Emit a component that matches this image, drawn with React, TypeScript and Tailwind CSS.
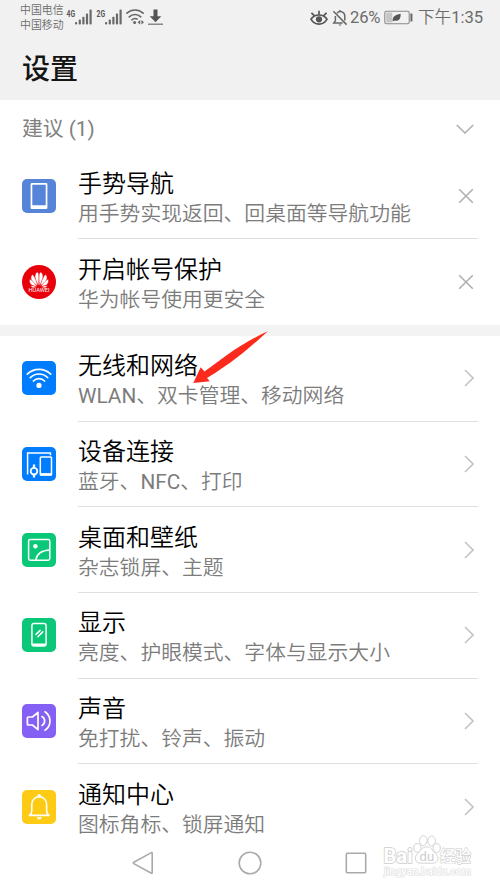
import type { ReactNode } from "react";

type Suggestion = {
    title: string;
    summary: string;
    icon: ReactNode;
};

type RowProps = Suggestion & {
    action: ReactNode;
    last?: boolean;
};

const PhoneIcon = () => (
    <svg viewBox="0 0 34 34" className="size-[34px]">
        <rect width="34" height="34" rx="5" fill="#5584d8" />
        <path
            fillRule="evenodd"
            fill="#fff"
            d="M9.8 4h14.4a1.2 1.2 0 0 1 1.2 1.2v23.6a1.2 1.2 0 0 1-1.2 1.2H9.8a1.2 1.2 0 0 1-1.2-1.2V5.2A1.2 1.2 0 0 1 9.8 4Zm.5 1.7v20.6h13.4V5.7Z"
        />
    </svg>
);

const HuaweiIcon = () => (
    <svg viewBox="0 0 34 34" className="size-[34px]">
        <circle cx="17" cy="17" r="17" fill="#e8000b" />
        <g fill="#fff" stroke="#e8000b" strokeWidth="0.4">
            <path d="M16.5 20.6C13.3 15.8 11.6 10.4 14.6 7.4c1.5-.5 2.2 1 2.3 3.6.1 3.6 0 7-.4 9.6Z" />
            <path d="M17.5 20.6c3.2-4.8 4.9-10.2 1.9-13.2-1.5-.5-2.2 1-2.3 3.6-.1 3.600 0 7 .4 9.600Z" />
            <path d="M15.500 20.700c-.8-4.200-2.300-8-4.700-11.300-3.600 2.400-2 7.400 4.700 11.300Z" />
            <path d="M18.500 20.700c.8-4.200 2.300-8 4.700-11.300 3.600 2.400 2 7.400-4.700 11.300Z" />
            <path d="M14.800 21.300c-1.700-2.900-4-5.300-6.900-7.300-1.400 4.200 1.500 7.300 6.900 7.300Z" />
            <path d="M19.200 21.300c1.700-2.900 4-5.300 6.900-7.300 1.400 4.200-1.500 7.300-6.900 7.300Z" />
            <path d="M14.800 22.100c-2.100-1-4.100-1.500-6.300-1.700 1 2.400 3.400 3 6.300 1.700Z" />
            <path d="M19.200 22.100c2.100-1 4.100-1.500 6.300-1.700-1 2.400-3.400 3-6.300 1.700Z" />
        </g>
        <text
            x="17"
            y="26.8"
            fill="#fff"
            fontSize="4.8"
            textAnchor="middle"
            textLength="21"
            lengthAdjust="spacingAndGlyphs"
        >
            HUAWEI
        </text>
    </svg>
);

const WifiIcon = () => (
    <svg viewBox="0 0 34 34" className="size-[34px]">
        <rect width="34" height="34" rx="5" fill="#007dff" />
        <g fill="none" stroke="#fff" strokeWidth="1.7" strokeLinecap="round">
            <path d="M5.3 13.2a16.6 16.6 0 0 1 23.4 0" />
            <path d="M8.3 16.6a12.3 12.3 0 0 1 17.4 0" />
            <path d="M11.4 20a7.9 7.9 0 0 1 11.2 0" />
        </g>
        <circle cx="17" cy="24.4" r="2.6" fill="#fff" />
    </svg>
);

const DevicesIcon = () => (
    <svg viewBox="0 0 34 34" className="size-[34px]">
        <rect width="34" height="34" rx="5" fill="#007dff" />
        <g fill="none" stroke="#fff" strokeWidth="1.5">
            <path d="M5.6 27.4V6.1h22.8v2.2" />
            <rect x="18.3" y="10" width="11.2" height="18" rx="0.8" />
            <path d="M18.3 27.3h11.2" strokeWidth="2.4" />
            <circle cx="12" cy="24.2" r="3.3" strokeWidth="1.8" />
            <path d="M12 17.6v3.2M12 27.6v3" strokeWidth="2.2" />
        </g>
    </svg>
);

const WallpaperIcon = () => (
    <svg viewBox="0 0 34 34" className="size-[34px]">
        <rect width="34" height="34" rx="5" fill="#0ac878" />
        <g fill="none" stroke="#fff" strokeWidth="1.5">
            <rect x="6.6" y="6.6" width="21.2" height="20.6" rx="1.6" />
            <path d="M13.8 27.2c.8-5.8 5.6-9.8 14-10.2" />
        </g>
        <circle cx="13.4" cy="13.2" r="2.2" fill="#fff" />
    </svg>
);

const DisplayIcon = () => (
    <svg viewBox="0 0 34 34" className="size-[34px]">
        <rect width="34" height="34" rx="5" fill="#0ac878" />
        <g fill="none" stroke="#fff" strokeWidth="1.5" strokeLinecap="round">
            <rect x="9.9" y="5.6" width="14.2" height="22.4" rx="2.2" />
            <path d="M11.4 26.8h11.2" strokeWidth="2.6" />
            <path d="M14 16.4l4.2-4M15.9 18.8l4.9-4.9" />
        </g>
    </svg>
);

const SoundIcon = () => (
    <svg viewBox="0 0 34 34" className="size-[34px]">
        <rect width="34" height="34" rx="5" fill="#8560f4" />
        <g
            fill="none"
            stroke="#fff"
            strokeWidth="1.7"
            strokeLinecap="round"
            strokeLinejoin="round"
        >
            <path d="M6.2 13h4.2l5.6-4.6v17.2L10.4 21H6.2q-.8 0-.8-.8v-6.4q0-.8.8-.8Z" />
            <path d="M20 12.6a5 5 0 0 1 0 8.8" />
            <path d="M23 7.8a11 11 0 0 1 0 18.4" />
        </g>
    </svg>
);

const BellIcon = () => (
    <svg viewBox="0 0 34 34" className="size-[34px]">
        <rect width="34" height="34" rx="5" fill="#fdcb14" />
        <path
            d="M7.4 25.4c1.6-1.4 2.4-2.8 2.4-5v-6.2a7.4 7.4 0 0 1 14.8 0v6.2c0 2.2.8 3.6 2.4 5Z"
            fill="none"
            stroke="#fff"
            strokeWidth="1.6"
            strokeLinejoin="round"
        />
        <circle cx="17.2" cy="5.8" r="1.8" fill="#fff" />
        <path d="M14.8 27.2h4.8a2.4 2.2 0 0 1-4.8 0Z" fill="#fff" />
    </svg>
);

const CloseIcon = () => (
    <svg viewBox="0 0 16 16" className="mr-1 size-4">
        <path d="M1.2 1.2l13.6 13.6M14.8 1.2L1.2 14.8" stroke="#b0b0b0" strokeWidth="1.6" />
    </svg>
);

const ChevronRight = () => (
    <svg viewBox="0 0 10 18" className="mr-1 h-[18px] w-[10px]">
        <path d="M1 1l8 8-8 8" fill="none" stroke="#c4c4c4" strokeWidth="1.6" />
    </svg>
);

const suggestions: Suggestion[] = [
    {
        title: "手势导航",
        summary: "用手势实现返回、回桌面等导航功能",
        icon: <PhoneIcon />,
    },
    {
        title: "开启帐号保护",
        summary: "华为帐号使用更安全",
        icon: <HuaweiIcon />,
    },
];

const settings: Suggestion[] = [
    {
        title: "无线和网络",
        summary: "WLAN、双卡管理、移动网络",
        icon: <WifiIcon />,
    },
    {
        title: "设备连接",
        summary: "蓝牙、NFC、打印",
        icon: <DevicesIcon />,
    },
    {
        title: "桌面和壁纸",
        summary: "杂志锁屏、主题",
        icon: <WallpaperIcon />,
    },
    {
        title: "显示",
        summary: "亮度、护眼模式、字体与显示大小",
        icon: <DisplayIcon />,
    },
    { title: "声音", summary: "免打扰、铃声、振动", icon: <SoundIcon /> },
    {
        title: "通知中心",
        summary: "图标角标、锁屏通知",
        icon: <BellIcon />,
    },
];

function Row({ title, summary, icon, action, last }: RowProps) {
    return (
        <li className="flex h-[85.7px] px-[22px]">
            <div className="flex w-14 shrink-0 items-center pb-px">{icon}</div>
            <div
                className={`flex flex-1 items-center justify-between border-b ${
                    last ? "border-transparent" : "border-[#dfdfdf]"
                }`}
            >
                <div className="whitespace-nowrap pt-[6px]">
                    <h2 className="text-[24px] font-[350] leading-[30px] text-black">
                        {title}
                    </h2>
                    <p className="text-[20.8px] font-[350] leading-[30px] text-[#7c7c7c]">
                        {/* Latin words keep the regular weight */}
                        {summary.split(/([A-Z]+)/).map((part, index) =>
                            /[A-Z]/.test(part) ? (
                                <span key={index} className="font-normal">
                                    {part}
                                </span>
                            ) : (
                                part
                            )
                        )}
                    </p>
                </div>
                {action}
            </div>
        </li>
    );
}

const Signal = ({ label }: { label: string }) => (
    <div className="flex">
        <svg viewBox="0 0 10 14" className="h-[14px] w-[10px] overflow-visible">
            <text
                x="0.5"
                y="11"
                fill="#555"
                fontSize="9.500"
                fontWeight="700"
                textLength="8.500"
                lengthAdjust="spacingAndGlyphs"
            >
                {label}
            </text>
        </svg>
        <svg viewBox="0 0 17 16" className="-ml-px mt-[3px] h-4 w-[17px]" fill="#6a6a6a">
            <rect x="0" y="13" width="2.2" height="2.6" rx="0.8" />
            <rect x="3.7" y="10.6" width="2.2" height="5" rx="0.8" />
            <rect x="7.3" y="7.8" width="2.2" height="7.8" rx="0.8" />
            <rect x="10.9" y="4.6" width="2.2" height="11" rx="0.8" />
            <rect x="14.5" y="0.6" width="2.2" height="15" rx="0.8" />
        </svg>
    </div>
);

function StatusBar() {
    return (
        <div className="flex h-[34px] justify-between pl-5 pr-4 text-[#6c6c6c]">
            <div className="flex pt-[3px]">
                <div className="w-[46px] whitespace-nowrap text-[10.9px] font-[350] leading-[15px]">
                    <div>中国电信</div>
                    <div>中国移动</div>
                </div>
                <div className="flex gap-[4px] pt-[3px]">
                    <Signal label="4G" />
                    <Signal label="2G" />
                </div>
                <svg
                    viewBox="0 0 18 16"
                    className="ml-[4px] mt-[6px] h-4 w-[18px]"
                    fill="none"
                    stroke="#666"
                    strokeWidth="1.6"
                    strokeLinecap="round"
                >
                    <path d="M.9 4.2a12 12 0 0 1 16.2 0M3.2 7.8a8.4 8.4 0 0 1 11.6 0M5.9 10.8a4.8 4.8 0 0 1 5.2-.8" />
                    <circle cx="8.6" cy="13.4" r="1.5" fill="#666" stroke="none" />
                    <path d="M14.2 11v4.6l-2.6-2.3ZM15.4 11v4.6l2.6-2.3Z" fill="#666" stroke="none" />
                </svg>
                <svg viewBox="0 0 15 17" className="ml-[4px] mt-[6px] h-[17px] w-[15px]">
                    <path d="M5.5.4h4v6.8h3.8L7.5 13.2 1.7 7.2h3.8Z" fill="#555" />
                    <path d="M0 15.2h15" stroke="#777" strokeWidth="1.3" />
                </svg>
            </div>
            <div className="flex h-[35px] items-center text-[16.6px]">
                <svg viewBox="0 0 18 16" className="-ml-px mr-px h-4 w-[18px]" fill="none" stroke="#555">
                    <path d="M1 9.2C4.6 3.6 13.4 3.6 17 9.2 13.4 15.8 4.6 15.8 1 9.2Z" strokeWidth="1.7" />
                    <circle cx="9" cy="9.3" r="3.1" fill="#555" stroke="none" />
                    <path d="M9 4.8V.8M4.6 5.8L1.4 2.8M13.4 5.8l3.2-3" strokeWidth="1.7" />
                </svg>
                <svg viewBox="0 0 16 16" className="ml-[3px] mr-px h-4 w-4" fill="none" stroke="#666" strokeWidth="1.5">
                    <path d="M5 3.2A4.4 4.4 0 0 1 12.8 6v4.4M10.6 13H1.8l1.6-2.4V6M1.4 1.2l13.2 13.4" />
                    <path d="M6.4 14.4h3.2L8 16Z" fill="#666" stroke="none" />
                    <path d="M8 0v2" />
                </svg>
                <span className="ml-px w-[34px] whitespace-nowrap leading-5 tracking-[-0.2px]">
                    26%
                </span>
                <svg viewBox="0 0 29 15" className="mr-[5px] h-[15px] w-[29px]">
                    <rect x=".8" y="1.2" width="24.4" height="12.6" rx="1.6" fill="none" stroke="#8a8a8a" strokeWidth="1.1" />
                    <rect x="2.2" y="2.6" width="6" height="9.8" fill="#c6c6c6" />
                    <path d="M8.8 11.6C8 6.8 11 5 16.6 3.8c.4 5-2 8-6.2 6.8Z" fill="#555" />
                    <rect x="26.4" y="3.6" width="2" height="8" rx=".6" fill="#666" />
                </svg>
                <span className="w-[66px] whitespace-nowrap leading-5">
                    <span className="font-[350]">下午</span>1:35
                </span>
            </div>
        </div>
    );
}

function NavigationBar() {
    return (
        <nav className="flex h-[38px] items-center justify-between pl-[132px] pr-[133px]">
            <svg viewBox="0 0 22 24" className="h-6 w-[22px]">
                <path
                    d="M19.4 1.6L1.8 11.2q-1 .7 0 1.4l17.6 9.6q.8.4.8-.6V2.2q0-1-.8-.6Z"
                    fill="none"
                    stroke="#aaa"
                    strokeWidth="1.6"
                />
            </svg>
            <svg viewBox="0 0 24 24" className="size-6">
                <circle cx="12" cy="12" r="10.8" fill="none" stroke="#aaa" strokeWidth="1.6" />
            </svg>
            <svg viewBox="0 0 22 22" className="size-[22px]">
                <rect x="1.3" y="1.3" width="19.4" height="19.4" rx="1" fill="none" stroke="#aaa" strokeWidth="1.6" />
            </svg>
        </nav>
    );
}

// Outlined white lettering with the paw between "Bai" and the Chinese name
const Watermark = () => (
    <svg
        viewBox="0 0 100 50"
        className="absolute left-[380px] top-[832px] h-[50px] w-[100px]"
        fill="#fff"
        stroke="#d4d4d4"
        strokeWidth="1.8"
        strokeLinejoin="round"
        paintOrder="stroke"
    >
        <text x="3.5" y="30.5" fontSize="20" fontWeight="700" textLength="29" lengthAdjust="spacingAndGlyphs">
            Bai
        </text>
        <g strokeWidth="1" paintOrder="normal">
            <ellipse cx="37.4" cy="15.9" rx="3.6" ry="4.4" />
            <ellipse cx="43.3" cy="8.6" rx="3.7" ry="5" />
            <ellipse cx="51.6" cy="9" rx="3.8" ry="5" />
            <ellipse cx="56.7" cy="16" rx="3.6" ry="4.4" />
            <path d="M46.8 14.8c4.5 0 5.6 4 9 7 4.4 4.2 1.9 9.4-3 9.400h-12c-5.200 0-7.400-5.200-3.400-9.400 3.200-3 4.900-7 9.400-7Z" />
        </g>
        <text x="39.6" y="29" fontSize="13" fill="#ccc" stroke="none" textLength="14.5">
            du
        </text>
        <text x="60" y="29.5" fontSize="15.5" fontWeight="500" strokeWidth="1.4">
            经验
        </text>
        <text x="4" y="43" fontSize="10" fontWeight="500" strokeWidth="1.2" stroke="#dedede" textLength="87" lengthAdjust="spacingAndGlyphs">
            jingyan.baidu.com
        </text>
    </svg>
);

function App() {
    return (
        <div className="relative h-[889px] w-[500px] overflow-hidden bg-white font-[Roboto,'Noto_Sans_CJK_SC',sans-serif]">
            <header className="h-[100px] bg-[#f1f1f1]">
                <StatusBar />
                <h1 className="pl-[22px] pt-px text-[28px] font-medium leading-[69px] text-[#151515]">
                    设置
                </h1>
            </header>

            <section>
                <div className="flex h-[53.5px] items-center justify-between pl-[22px] pr-[26px] pt-[5px]">
                    <h3 className="pt-px text-[20.8px] text-[#808080]">建议 (1)</h3>
                    <svg viewBox="0 0 18 10" className="h-[10px] w-[18px]">
                        <path d="M.8 1L9 9l8.2-8" fill="none" stroke="#b0b0b0" strokeWidth="1.6" />
                    </svg>
                </div>
                <ul>
                    {suggestions.map((item, index) => (
                        <Row
                            key={item.title}
                            {...item}
                            action={<CloseIcon />}
                            last={index === suggestions.length - 1}
                        />
                    ))}
                </ul>
            </section>

            <div className="h-[11px] bg-[#f3f3f3]" />

            <ul>
                {settings.map((item, index) => (
                    <Row
                        key={item.title}
                        {...item}
                        action={<ChevronRight />}
                        last={index === settings.length - 1}
                    />
                ))}
            </ul>

            <div className="-mt-[6px]">
                <NavigationBar />
            </div>

            {/* Arrow pointing at the network entry */}
            <svg viewBox="0 0 78 56" className="absolute left-[192px] top-[330px] h-14 w-[78px]">
                <path
                    d="M75.8 1.2C61 8 47 16.500 35 25L12.500 41.500 8.700 37.300 1.300 52.900l16.500-1.700-2.800-3.200C26 41.500 36 34.500 45 27.600 56 19.500 66 10 75.800 1.200Z"
                    fill="#fb2a1c"
                />
            </svg>
            <Watermark />
        </div>
    );
}

export default App;
